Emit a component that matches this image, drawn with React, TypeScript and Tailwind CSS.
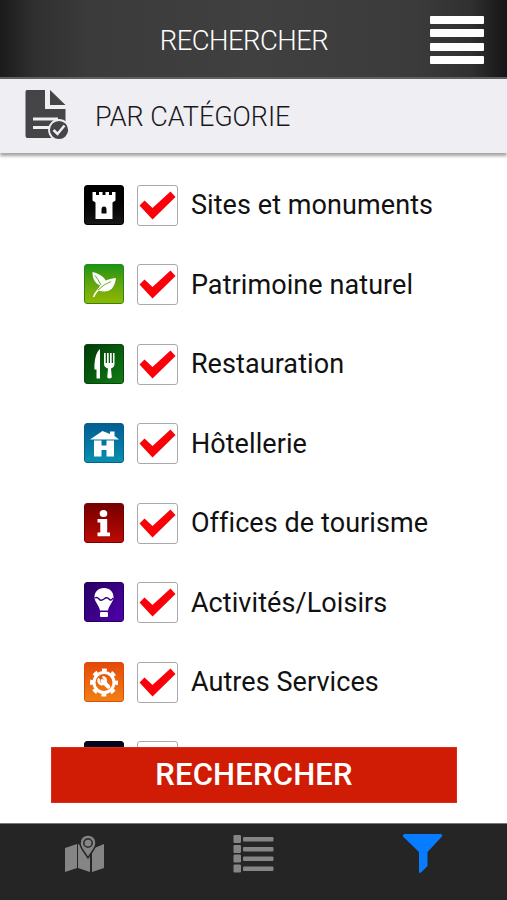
import React from "react";

type Category = {
    label: string;
    tile: string;
    icon: React.ReactNode;
};

const categories: Category[] = [
    {
        label: "Sites et monuments",
        tile: "border-black bg-linear-to-b from-[#000000] to-[#181818]",
        icon: (
            <path d="M8.500 7h3.500v3h3V7h3.500v3h3V7H25v3h3V7h3.500v8.500l-3 2V34h-17V17.500l-3-2zM20 21.500q-2.500 0-2.500 3v4h5v-4q0-3-2.500-3z" fillRule="evenodd" />
        ),
    },
    {
        label: "Patrimoine naturel",
        tile: "border-[#278718] bg-linear-to-b from-[#159313] to-[#91b800]",
        icon: (
            <>
                <path d="M8.500 8C16 10 22 14 22 18.500L17 22C10 19 8.500 14 8.500 8z" />
                <path d="M32 14C30 27 24 29 14 26.500C16 18 22 15 32 14z" />
                <path d="M9.500 33Q13 25 21 20" fill="none" stroke="white" strokeWidth="1.600" />
                <path d="M14 26Q20 20 27 17.500M17 21Q14 15 11 11.500" fill="none" stroke="#52a309" strokeWidth="0.900" />
            </>
        ),
    },
    {
        label: "Restauration",
        tile: "border-[#07450b] bg-linear-to-br from-[#003c08] to-[#137c15]",
        icon: (
            <>
                <path d="M16 5V34.500H12.500V25.500H10.500C10 17 12 8 16 5z" />
                <path d="M20 9h1.700v10h1.300V9h1.700v10h1.300V9h1.700v10h1.300V9h1.500v11q0 3-3.500 4.500l.8 9q-2.300 2-4.600 0l.8-9Q20 23 20 20z" />
            </>
        ),
    },
    {
        label: "Hôtellerie",
        tile: "border-[#08608d] bg-linear-to-b from-[#045d93] to-[#098fae]",
        icon: (
            <>
                <path d="M6 16.500L18.500 8L26 11V8.500H30.500V13L35 16.500z" />
                <path d="M10 17.500H17.500V22.500H22.500V17.500H30V33.500H22.500V27H17.500V33.500H10z" />
            </>
        ),
    },
    {
        label: "Offices de tourisme",
        tile: "border-[#780000] bg-linear-to-b from-[#760000] to-[#bd0b05]",
        icon: (
            <>
                <ellipse cx="19.500" cy="10.500" rx="3.800" ry="3.600" />
                <path d="M13.500 16H23.200V29.500H26V33.300H13.500V29.500H16.300V19.500H13.500z" />
            </>
        ),
    },
    {
        label: "Activités/Loisirs",
        tile: "border-[#210066] bg-linear-to-br from-[#26005f] to-[#5200ae]",
        icon: (
            <>
                <path d="M20 6C14 6 10.500 10 10.500 15C10.500 20 15 23 16 28.500H24C25 23 29.500 20 29.500 15C29.500 10 26 6 20 6z" />
                <path d="M11 16Q13 14.500 15 17T20 17T25 17T29 16" fill="none" stroke="#30007d" strokeWidth="1.400" />
                <rect x="16" y="30" width="8" height="5" rx="1" />
            </>
        ),
    },
    {
        label: "Autres Services",
        tile: "border-[#dc4b0d] bg-linear-to-b from-[#e44809] to-[#f08013]",
        icon: (
            <>
                <circle cx="20" cy="20.500" r="10" fill="none" stroke="white" strokeWidth="3" />
                <circle cx="20" cy="20.500" r="12.500" fill="none" stroke="white" strokeWidth="3" strokeDasharray="4.900 4.917" strokeDashoffset="2.450" />
                <path d="M18.500 19L24.300 24.700" stroke="white" strokeWidth="4" strokeLinecap="round" />
                <path d="M15.200 16.500A3.600 3.600 0 1 0 18.500 15" fill="none" stroke="white" strokeWidth="2.600" />
            </>
        ),
    },
    {
        label: "",
        tile: "border-[#03051b] bg-[#03051b]",
        icon: null,
    },
];

const CategoryRow: React.FC<{ category: Category }> = ({ category }) => {
    return (
        <label className="flex h-[79.5px] shrink-0 items-start">
            <span className={`h-10 w-10 overflow-hidden rounded-[3px] border ${category.tile}`}>
                <svg viewBox="0 0 40 40" className="-m-px h-10 w-10 max-w-none fill-white">
                    {category.icon}
                </svg>
            </span>
            <span className="ml-[12.5px] h-[41px] w-[41px] rounded-[3px] border border-[#aaaaaa] bg-white">
                <svg viewBox="0 0 41 41" className="-m-px h-[41px] w-[41px] max-w-none">
                    <path d="M2.500 20.500L7.500 15.500L15.500 23L33.500 6.500L38.500 12L15.500 34.500z" fill="#fa0008" />
                </svg>
            </span>
            <span className="ml-[13.4px] pt-[0.900px] text-[27px] leading-[41px] tracking-[0.08px] whitespace-nowrap text-[#111111]">{category.label}</span>
        </label>
    );
};

const App: React.FC = () => {
    return (
        <div className="flex h-[900px] w-[507px] flex-col overflow-hidden bg-white font-['Roboto',sans-serif]">
            {/* Header */}
            <header className="grid h-[79px] shrink-0 grid-cols-[1fr_auto_1fr] items-center border-b-2 border-[#606060] bg-[linear-gradient(90deg,#1b1b1b_0%,#303030_7%,#3b3b3b_18%,#404040_50%,#3b3b3b_82%,#303030_93%,#151515_100%)] pt-[3px]">
                <span />
                <h1 className="-ml-[19px] pt-0.5 text-[27.5px] font-light tracking-[-0.55px] text-white">RECHERCHER</h1>
                <button type="button" aria-label="Menu" className="mr-[23px] flex flex-col gap-[5.300px] justify-self-end">
                    <span className="h-2 w-[54px] rounded-[1px] bg-white" />
                    <span className="h-2 w-[54px] rounded-[1px] bg-white" />
                    <span className="h-2 w-[54px] rounded-[1px] bg-white" />
                    <span className="h-2 w-[54px] rounded-[1px] bg-white" />
                </button>
            </header>

            {/* Section title */}
            <div className="z-10 flex h-[74px] shrink-0 items-center bg-[#efeef3] pl-6 shadow-[0_3px_3px_#a5a5a5]">
                <svg viewBox="0 0 46 54" className="h-[54px] w-[46px]">
                    <path d="M3 1H21V20H41.500V47Q41.500 49 39.500 49H3.500Q1.500 49 1.500 47V3Q1.500 1 3 1z" fill="#454548" />
                    <path d="M26 1L41.500 16H26z" fill="#454548" />
                    <path d="M9 30H34M9 38.500H27" stroke="#efeef3" strokeWidth="2.800" />
                    <circle cx="35" cy="41" r="10" fill="#454548" stroke="#efeef3" strokeWidth="1.800" />
                    <path d="M29.500 41L33.500 45L40.500 36.500" fill="none" stroke="#efeef3" strokeWidth="2.500" />
                </svg>
                <h2 className="ml-[25px] pt-[3px] text-[27px] font-light tracking-[-0.05px] text-[#18181c]">PAR CATÉGORIE</h2>
            </div>

            {/* Categories */}
            <main className="flex h-[594px] shrink-0 flex-col overflow-hidden pt-[31.500px] pl-[84px]">
                {categories.map((category, i) => (
                    <CategoryRow key={i} category={category} />
                ))}
            </main>

            {/* Submit */}
            <button type="button" className="mx-[51px] mr-[50px] h-14 shrink-0 border border-[#da2b1b] bg-[#d01c05] text-[31px] leading-[52px] font-medium tracking-[0.2px] text-white">
                RECHERCHER
            </button>

            {/* Bottom tabs */}
            <nav className="mt-5 flex flex-1 items-start border-t border-[#777777] bg-[#252525] pt-[10px]">
                <button type="button" aria-label="Carte" className="flex w-[169px] justify-center">
                    <svg viewBox="0 0 42 42" className="h-[42px] w-[42px] fill-[#858585]">
                        <path d="M1 14L13 10V34L1 38zM14 10L26 15V38L14 34zM28 15L40 10V34L28 38z" />
                        <path d="M24 1C19 1 16 4.500 16 9C16 14 20 17 24 24C28 17 32 14 32 9C32 4.500 29 1 24 1z" stroke="#252525" strokeWidth="1.500" />
                        <circle cx="24" cy="9" r="4.200" stroke="#333333" strokeWidth="1.700" />
                    </svg>
                </button>
                <button type="button" aria-label="Liste" className="flex w-[169px] justify-center">
                    <svg viewBox="0 0 42 42" className="h-[42px] w-[42px] fill-[#858585]">
                        {[1, 11, 20.5, 30.5].map((y) => (
                            <g key={y}>
                                <rect x="0.500" y={y} width="7.500" height="8" rx="1.200" />
                                <rect x="10" y={y + 2} width="30.500" height="4.500" rx="1" />
                            </g>
                        ))}
                    </svg>
                </button>
                <button type="button" aria-label="Filtre" className="flex w-[169px] justify-center">
                    <svg viewBox="0 0 42 42" className="h-[42px] w-[42px] fill-[#087cff]">
                        <path d="M2.500 0H39Q41 1 39.500 3L25.500 18V32L18.500 39Q17 39 17 37.500V18L1.500 3Q0 1 2.500 0z" />
                    </svg>
                </button>
            </nav>
        </div>
    );
};

export default App;
